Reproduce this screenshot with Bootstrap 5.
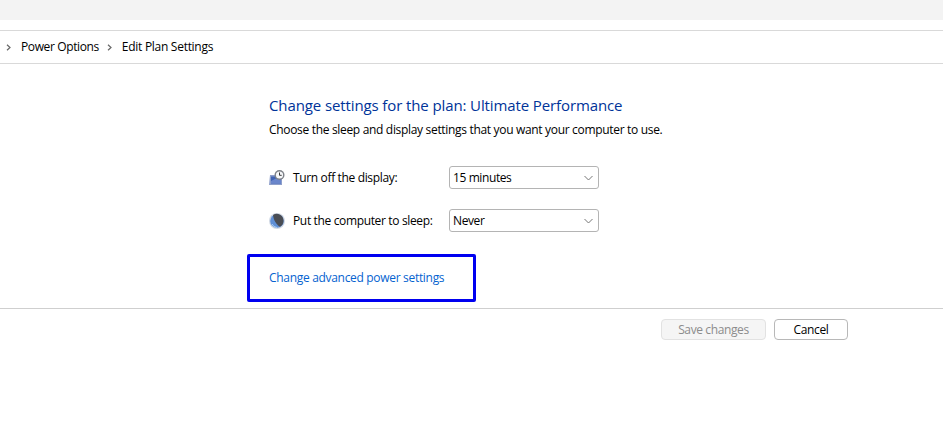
<!doctype html>
<html lang="en">
<head>
<meta charset="utf-8">
<title>Edit Plan Settings</title>
<link rel="stylesheet" href="https://cdn.jsdelivr.net/npm/bootstrap@5.3.0/dist/css/bootstrap.min.css">
<style>
html,body{height:428px;overflow:hidden}
body{background:#fff;color:#000;font-family:"Open Sans","Noto Sans","Liberation Sans",sans-serif;font-size:12px;line-height:16px}
.top-strip{height:20px;background:#f3f3f3}
.crumb-bar{margin-top:10px;height:34px;border-top:1px solid #d9d9d9;border-bottom:1px solid #d9d9d9;padding-left:6px}
.crumb-bar svg{width:5px;height:7px;flex:none}
.crumb-text{letter-spacing:-.38px}
.crumb-a{margin-left:10px;margin-right:8px}
.crumb-b{margin-left:10px;letter-spacing:-.28px}
.main-col{margin-left:269px;padding-top:31px}
.plan-title{font-size:15px;line-height:20px;font-weight:400;color:#003399;margin:0;letter-spacing:-.11px}
.plan-sub{margin:6px 0 0;letter-spacing:-.32px;line-height:18px}
.set-row{height:23px}
.set-row.first{margin-top:27px}
.set-row.second{margin-top:20px}
.set-row svg{width:16px;height:16px;flex:none}
.set-label{width:164px;padding-left:8px;letter-spacing:-.35px}
.set-select{width:150px;height:23px;border:1px solid #b4b4b4;border-radius:3px;padding:0 5px 0 3px;letter-spacing:-.4px}
.set-select svg{width:9px;height:6px}
.adv-box{margin-left:247px;margin-top:22px;width:229px;height:48px;border:3px solid #0000f0;border-radius:2px;padding-left:19px}
.adv-box a{color:#0563d0;text-decoration:none;letter-spacing:-.31px}
.foot-row{margin-top:6px;border-top:1px solid #cfcfcf;padding:10px 95px 0 0;gap:8px}
.foot-btn{width:105px;height:21px;padding:0;font-size:12px;line-height:19px;border-radius:4px;letter-spacing:-.38px;color:#000;background:#fff;border:1px solid #b8b8b8}
.foot-btn.save{background:#f5f5f5;border-color:#e2e2e2;color:#8c8c8c;opacity:1}
.foot-btn.cancel{width:74px}
</style>
</head>
<body>
<div class="top-strip"></div>
<nav class="crumb-bar d-flex align-items-center">
  <svg viewBox="0 0 5 7"><path d="M1 .8 4 3.5 1 6.2" fill="none" stroke="#666" stroke-width="1.2"/></svg>
  <span class="crumb-text crumb-a">Power Options</span>
  <svg viewBox="0 0 5 7"><path d="M1 .8 4 3.5 1 6.2" fill="none" stroke="#666" stroke-width="1.2"/></svg>
  <span class="crumb-text crumb-b">Edit Plan Settings</span>
</nav>
<div class="main-col">
  <h1 class="plan-title">Change settings for the plan: Ultimate Performance</h1>
  <p class="plan-sub">Choose the sleep and display settings that you want your computer to use.</p>
  <div class="set-row first d-flex align-items-center">
    <svg viewBox="0 0 16 16"><path d="M1 5h9v1.500l3 2.500v6H0z" fill="#8e9fcb"/><path d="M2 6.500h8l2 2.500v4.500H2z" fill="#3f62b2"/><path d="M2 11l6-3 4 2v3.500H2z" fill="#6a86cc"/><circle cx="10.500" cy="5" r="5" fill="#7d8188"/><circle cx="10.500" cy="5" r="3.600" fill="#f6f7f9"/><path d="M10.500 2.500v2.800h2.200" fill="none" stroke="#3b3b3b" stroke-width="1"/></svg>
    <span class="set-label">Turn off the display:</span>
    <div class="set-select d-flex align-items-center justify-content-between"><span>15 minutes</span><svg viewBox="0 0 9 6"><path d="M.5 1 4.500 5 8.500 1" fill="none" stroke="#777" stroke-width="1"/></svg></div>
  </div>
  <div class="set-row second d-flex align-items-center">
    <svg viewBox="0 0 16 16"><circle cx="8" cy="8" r="8" fill="#d0d8e4"/><circle cx="8" cy="8" r="6.800" fill="#5f8fd6"/><path d="M4 2a6.800 6.800 0 0 1 10.500 6c0 2.500-1.500 4.800-3.500 5.700C7.500 12 4.500 7 4 2z" fill="#4a4d54"/><path d="M3 11a6 6 0 0 0 5 3.500" fill="none" stroke="#a9cdf2" stroke-width="1"/></svg>
    <span class="set-label">Put the computer to sleep:</span>
    <div class="set-select d-flex align-items-center justify-content-between"><span>Never</span><svg viewBox="0 0 9 6"><path d="M.5 1 4.500 5 8.500 1" fill="none" stroke="#777" stroke-width="1"/></svg></div>
  </div>
</div>
<div class="adv-box d-flex align-items-center"><a href="#">Change advanced power settings</a></div>
<div class="foot-row d-flex justify-content-end">
  <button class="btn foot-btn save" type="button" disabled>Save changes</button>
  <button class="btn foot-btn cancel" type="button">Cancel</button>
</div>
<script src="https://cdn.jsdelivr.net/npm/bootstrap@5.3.0/dist/js/bootstrap.bundle.min.js"></script>
</body>
</html>
